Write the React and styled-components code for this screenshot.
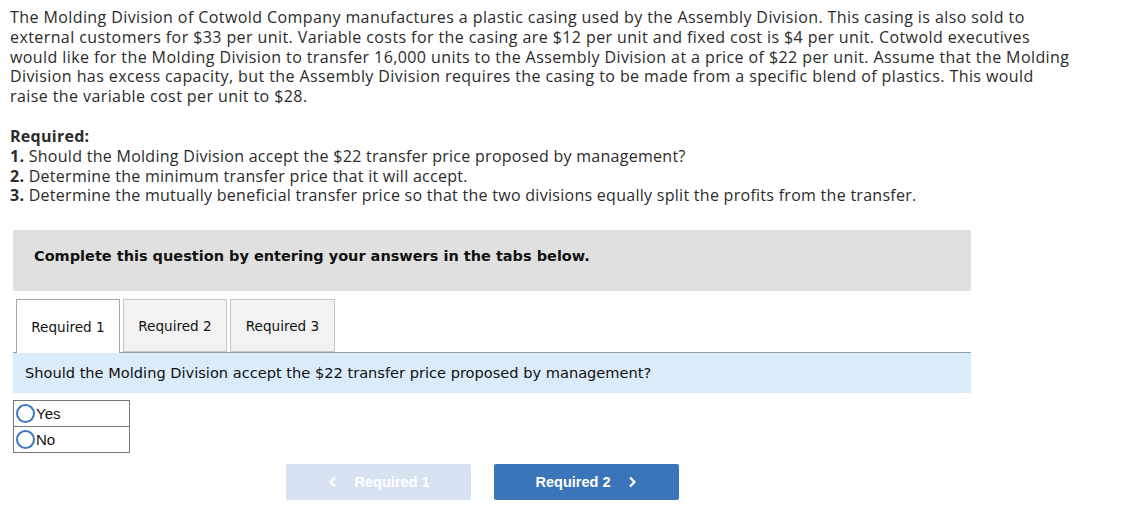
import React, { useState } from 'react';
import styled, { createGlobalStyle } from 'styled-components';

const GlobalStyle = createGlobalStyle`
  body {
    margin: 0;
    background: #ffffff;
    color: #222;
  }
`;

const Page = styled.div`
  padding: 8px 10px 0 10px;
  width: 1109px;
  box-sizing: border-box;
`;

const Intro = styled.p`
  margin: 0;
  font-family: 'Open Sans', Lato, sans-serif;
  font-size: 16px;
  line-height: 19.8px;
  letter-spacing: 0.41px;
  color: #2b2b2b;
  white-space: nowrap;
`;

const Required = styled.div`
  margin-top: 20px;
  font-family: 'Open Sans', Lato, sans-serif;
  font-size: 16px;
  line-height: 19.8px;
  letter-spacing: 0.28px;
  color: #2b2b2b;
`;

const RequiredTitle = styled.div`
  font-weight: 700;
`;

const Num = styled.b`
  font-weight: 700;
`;

const Instructions = styled.div`
  margin: 24px 0 0 3px;
  width: 958px;
  height: 61px;
  background: #e0e0e0;
  display: flex;
  align-items: center;
  padding: 0 0 9px 21px;
  box-sizing: border-box;
  font-family: 'DejaVu Sans', Verdana, sans-serif;
  font-weight: 700;
  font-size: 14.5px;
  color: #111;
`;

const TabArea = styled.div`
  margin: 8px 0 0 3px;
  width: 958px;
  font-family: 'DejaVu Sans', Verdana, sans-serif;
`;

const TabRow = styled.div`
  display: flex;
  gap: 3px;
  padding-left: 3px;
  border-bottom: 1px solid #999;
  height: 53px;
  align-items: flex-end;
`;

const Tab = styled.button`
  height: ${p => (p.$active ? '54px' : '53px')};
  margin-bottom: ${p => (p.$active ? '-1px' : '0')};
  width: ${p => p.$w}px;
  border: 1px solid ${p => (p.$active ? '#a6a6a6' : '#c8c8c8')};
  border-bottom: ${p => (p.$active ? 'none' : '1px solid #c8c8c8')};
  background: ${p => (p.$active ? '#ffffff' : '#f2f2f2')};
  font-family: 'DejaVu Sans', Verdana, sans-serif;
  font-size: 13.6px;
  color: #111;
  padding: 0;
  cursor: pointer;
  box-sizing: border-box;
`;

const QuestionBand = styled.div`
  height: 40px;
  background: #daebf9;
  display: flex;
  align-items: center;
  padding: 0 0 1px 12px;
  box-sizing: border-box;
  font-size: 14.6px;
  color: #111;
`;

const Options = styled.div`
  margin: 7px 0 0 0;
  width: 117px;
  border: 1px solid #777;
  box-sizing: border-box;
`;

const Option = styled.label`
  display: flex;
  align-items: center;
  gap: 1px;
  height: 25px;
  border-top: ${p => (p.$first ? 'none' : '1px solid #777')};
  font-family: 'Liberation Sans', Arial, sans-serif;
  font-size: 15px;
  color: #111;
  cursor: pointer;
`;

const Ring = styled.span`
  width: 19px;
  height: 19px;
  margin-left: 2px;
  border: 2.5px solid #3d77bd;
  border-radius: 50%;
  box-sizing: border-box;
  display: flex;
  align-items: center;
  justify-content: center;
  &::after {
    content: '';
    width: 8px;
    height: 8px;
    border-radius: 50%;
    background: ${p => (p.$on ? '#3d77bd' : 'transparent')};
  }
`;

const Nav = styled.div`
  display: flex;
  gap: 23px;
  margin: 11px 0 0 273px;
`;

const NavButton = styled.button`
  width: 185px;
  height: 36px;
  border: none;
  border-radius: 2px;
  background: ${p => (p.$disabled ? '#d7e3f1' : '#3a75b9')};
  color: #fff;
  font-family: 'Liberation Sans', Arial, sans-serif;
  font-weight: 700;
  font-size: 14.5px;
  display: flex;
  align-items: center;
  justify-content: center;
  gap: 18px;
  cursor: ${p => (p.$disabled ? 'default' : 'pointer')};
`;

const Chevron = ({ dir }) => (
  <svg width="9" height="12" viewBox="0 0 9 12">
    <path
      d={dir === 'left' ? 'M7 1.5 L2.5 6 L7 10.5' : 'M2 1.5 L6.5 6 L2 10.5'}
      fill="none"
      stroke="#fff"
      strokeWidth="2.2"
    />
  </svg>
);

const tabs = [
  { id: 1, label: 'Required 1', w: 104 },
  { id: 2, label: 'Required 2', w: 104 },
  { id: 3, label: 'Required 3', w: 105 },
];

const introLines = [
  'The Molding Division of Cotwold Company manufactures a plastic casing used by the Assembly Division. This casing is also sold to',
  'external customers for $33 per unit. Variable costs for the casing are $12 per unit and fixed cost is $4 per unit. Cotwold executives',
  'would like for the Molding Division to transfer 16,000 units to the Assembly Division at a price of $22 per unit. Assume that the Molding',
  'Division has excess capacity, but the Assembly Division requires the casing to be made from a specific blend of plastics. This would',
  'raise the variable cost per unit to $28.',
];

export default function App() {
  const [choice, setChoice] = useState(null);
  return (
    <>
      <GlobalStyle />
      <Page>
        <Intro>
          {introLines.map((line, i) => (
            <React.Fragment key={i}>
              {line}
              {i < introLines.length - 1 && <br />}
            </React.Fragment>
          ))}
        </Intro>
        <Required>
          <RequiredTitle>Required:</RequiredTitle>
          <div><Num>1.</Num> Should the Molding Division accept the $22 transfer price proposed by management?</div>
          <div><Num>2.</Num> Determine the minimum transfer price that it will accept.</div>
          <div><Num>3.</Num> Determine the mutually beneficial transfer price so that the two divisions equally split the profits from the transfer.</div>
        </Required>
        <Instructions>Complete this question by entering your answers in the tabs below.</Instructions>
        <TabArea>
          <TabRow>
            {tabs.map(t => (
              <Tab key={t.id} $w={t.w} $active={t.id === 1}>
                {t.label}
              </Tab>
            ))}
          </TabRow>
          <QuestionBand>Should the Molding Division accept the $22 transfer price proposed by management?</QuestionBand>
          <Options>
            {['Yes', 'No'].map((o, i) => (
              <Option key={o} $first={i === 0} onClick={() => setChoice(o)}>
                <Ring $on={choice === o} />
                {o}
              </Option>
            ))}
          </Options>
          <Nav>
            <NavButton $disabled>
              <Chevron dir="left" />
              Required 1
            </NavButton>
            <NavButton>
              Required 2
              <Chevron dir="right" />
            </NavButton>
          </Nav>
        </TabArea>
      </Page>
    </>
  );
}
